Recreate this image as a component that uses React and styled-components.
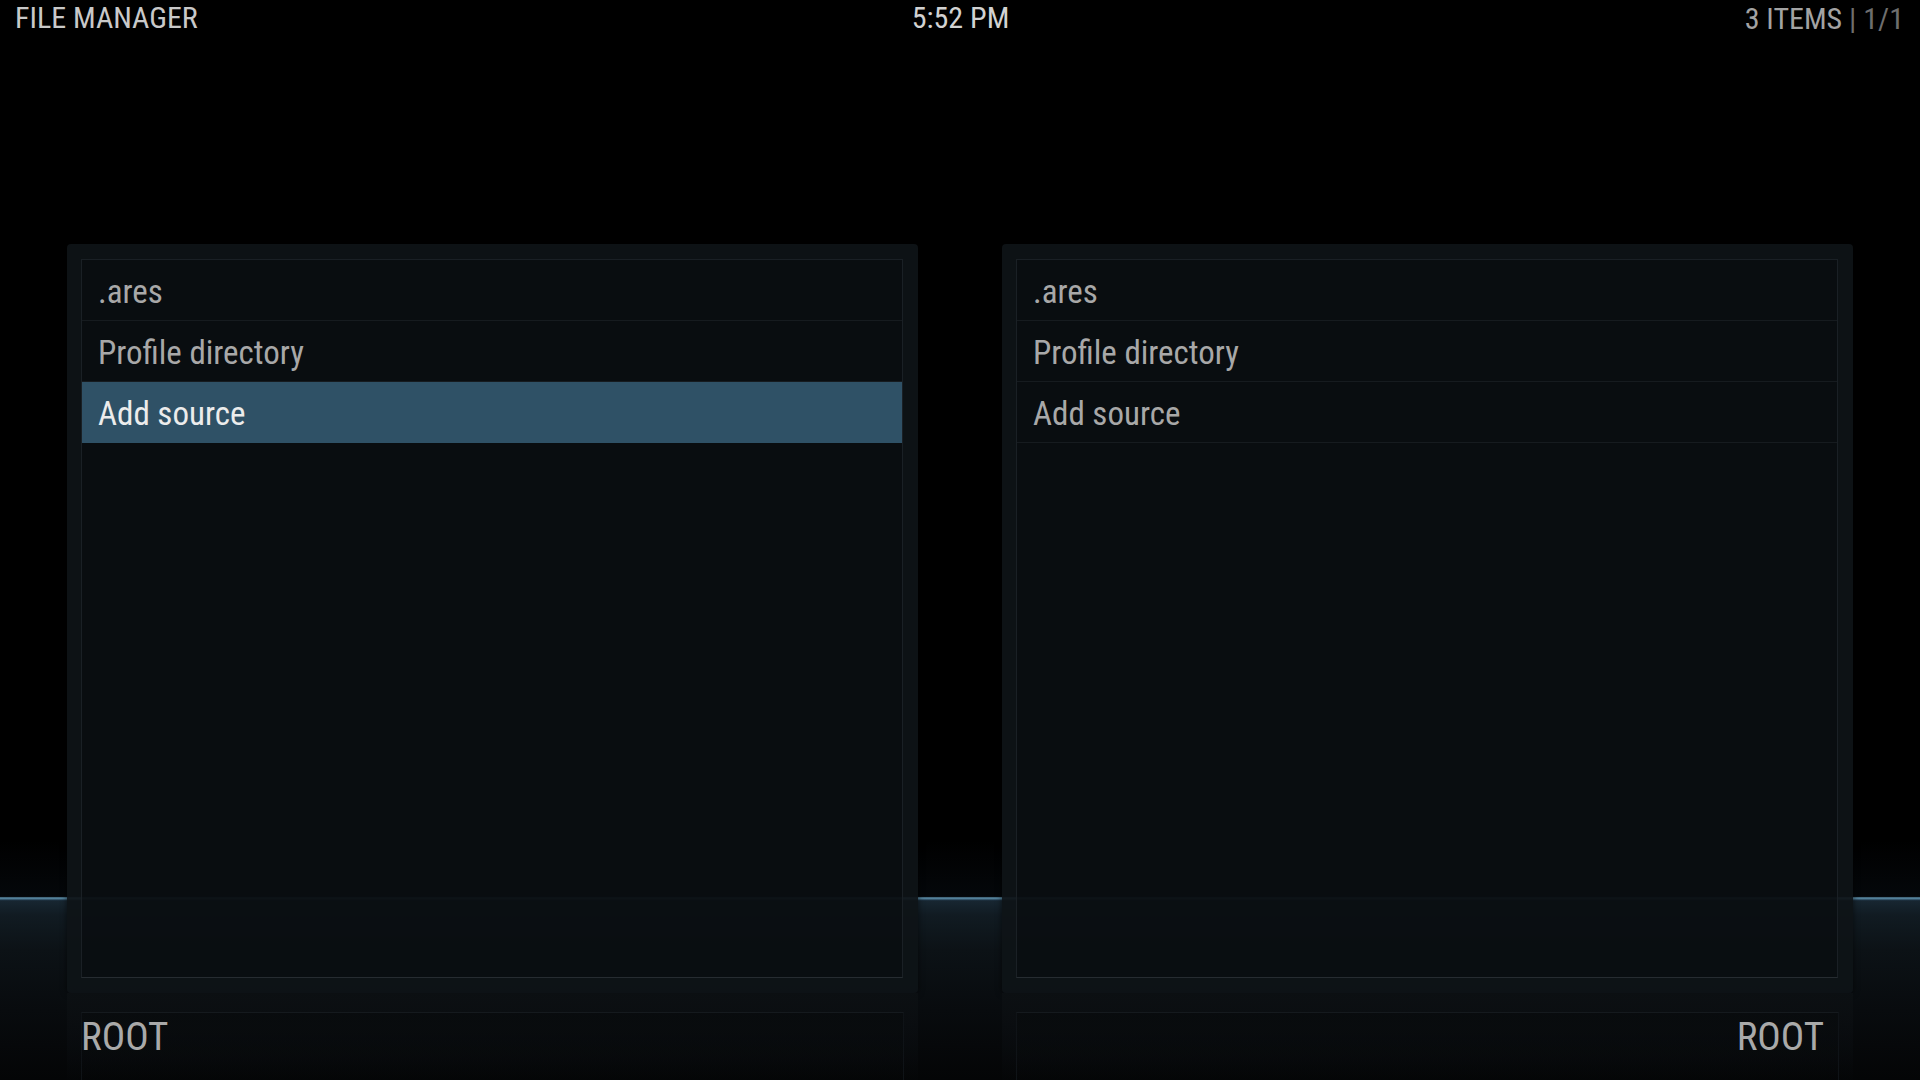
import React from "react";
import styled, { createGlobalStyle } from "styled-components";

const GlobalStyle = createGlobalStyle`
  html, body {
    margin: 0;
    padding: 0;
    background: #000;
  }
  body {
    font-family: "Roboto", "Liberation Sans", sans-serif;
    font-stretch: condensed;
  }
`;

const panes = [
  { id: "left", items: [".ares", "Profile directory", "Add source"], selected: 2, align: "left" },
  { id: "right", items: [".ares", "Profile directory", "Add source"], selected: -1, align: "right" },
];

const App = () => {
  return (
    <>
      <GlobalStyle />
      <Screen>
        <Header>
          <Title>FILE MANAGER</Title>
          <Clock>5:52 PM</Clock>
          <Counter>
            3 ITEMS <Dim>| 1/1</Dim>
          </Counter>
        </Header>
        <Columns>
          {panes.map((pane) => (
            <Column key={pane.id}>
              <Panel>
                <List>
                  {pane.items.map((item, i) => (
                    <Row key={item} $selected={i === pane.selected}>
                      {item}
                    </Row>
                  ))}
                </List>
              </Panel>
              <Reflection>
                <ReflectionBox $align={pane.align}>
                  <PathLabel>ROOT</PathLabel>
                </ReflectionBox>
              </Reflection>
            </Column>
          ))}
        </Columns>
      </Screen>
    </>
  );
};

export default App;

const Screen = styled.div`
  width: 1920px;
  height: 1080px;
  overflow: hidden;
  display: flex;
  flex-direction: column;
  background:
    linear-gradient(
      to bottom,
      transparent 897px,
      #2e4a5a 897px,
      #5b8aa3 898px,
      #4a7791 899px,
      #22384a 900px,
      transparent 901px
    ),
    linear-gradient(
      to bottom,
      #000 0,
      #000 840px,
      #04070a 896px,
      #172631 901px,
      #111b22 915px,
      #0c1216 950px,
      #080b0e 1010px,
      #040506 1080px
    );
`;

const Header = styled.header`
  height: 44px;
  box-sizing: border-box;
  padding: 3px 16px 0 15px;
  display: grid;
  grid-template-columns: 1fr auto 1fr;
  align-items: start;
  font-size: 30px;
  line-height: 1;
`;

const Title = styled.div`
  color: #c9c9c9;
`;

const Clock = styled.div`
  color: #d2d2d2;
  padding-left: 2px;
`;

const Counter = styled.div`
  color: #a3a3a3;
  text-align: right;
  padding-top: 1px;
`;

const Dim = styled.span`
  color: #6e6e6e;
`;

const Columns = styled.main`
  flex: 1;
  display: grid;
  grid-template-columns: 851px 851px;
  column-gap: 84px;
  padding: 200px 67px 0;
  min-height: 0;
`;

const Column = styled.section`
  display: flex;
  flex-direction: column;
`;

const Panel = styled.div`
  height: 749px;
  box-sizing: border-box;
  padding: 15px 15px 15px 14px;
  display: flex;
  border-radius: 4px;
  background: rgba(14, 19, 23, 0.93);
  box-shadow: 0 0 6px rgba(0, 0, 0, 0.6);
`;

const List = styled.ul`
  flex: 1;
  margin: 0;
  padding: 0;
  list-style: none;
  border: 1px solid #1a2025;
  border-bottom-color: #262c31;
  background: rgba(4, 7, 9, 0.35);
`;

const Row = styled.li`
  height: 61px;
  box-sizing: border-box;
  padding: 3px 16px 0;
  display: flex;
  align-items: center;
  font-size: 33px;
  color: ${(p) => (p.$selected ? "#ececec" : "#a8a8a8")};
  background: ${(p) => (p.$selected ? "#2f5166" : "transparent")};
  border-bottom: 1px solid ${(p) => (p.$selected ? "#2f5166" : "#161b1f")};
`;

const Reflection = styled.div`
  flex: 1;
  display: flex;
  padding: 19px 14px 0 14px;
  background: linear-gradient(
    to bottom,
    rgba(12, 16, 19, 0.9) 0,
    rgba(10, 13, 16, 0.6) 60%,
    rgba(6, 8, 10, 0.2) 100%
  );
`;

const ReflectionBox = styled.div`
  flex: 1;
  display: flex;
  justify-content: ${(p) => (p.$align === "right" ? "flex-end" : "flex-start")};
  align-items: flex-start;
  padding: 5px ${(p) => (p.$align === "right" ? "14px" : "0")} 0 0;
  border-top: 1px solid #151a1e;
  border-left: 1px solid #0f1317;
  border-right: 1px solid #0f1317;
  background: linear-gradient(to bottom, rgba(8, 11, 13, 0.8), rgba(4, 6, 7, 0.2));
`;

const PathLabel = styled.div`
  font-size: 39px;
  line-height: 1;
  color: #a9a9a9;
  margin-left: -1px;
`;
